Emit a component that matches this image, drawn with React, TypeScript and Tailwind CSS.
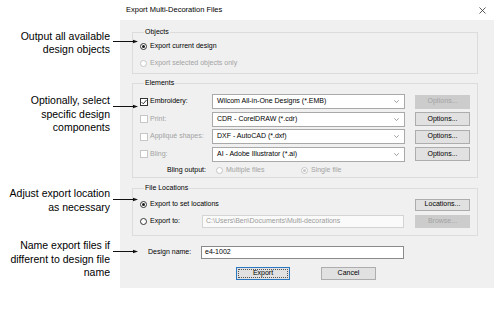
import clsx from "clsx";

const sans = "font-['Liberation_Sans',Arial,sans-serif]";

function Radio({ checked, disabled }: { checked?: boolean; disabled?: boolean }) {
  return (
    <span
      className={clsx(
        "flex h-[7px] w-[7px] shrink-0 items-center justify-center rounded-full border bg-white",
        disabled ? "border-[#c6c6c6]" : "border-[#333333]"
      )}
    >
      {checked && (
        <span className={clsx("h-[3px] w-[3px] rounded-full", disabled ? "bg-[#c6c6c6]" : "bg-[#1a1a1a]")} />
      )}
    </span>
  );
}

function Check({ checked, disabled }: { checked?: boolean; disabled?: boolean }) {
  return (
    <span
      className={clsx(
        "flex h-[8px] w-[8px] shrink-0 items-center justify-center border bg-white",
        disabled ? "border-[#c6c6c6]" : "border-[#333333]"
      )}
    >
      {checked && (
        <svg width="6" height="6" viewBox="0 0 6 6">
          <path d="M0.6 3.1 L2.3 4.8 L5.5 1" fill="none" stroke="#222" strokeWidth="0.9" />
        </svg>
      )}
    </span>
  );
}

function Btn({ label, disabled, className }: { label: string; disabled?: boolean; className?: string }) {
  return (
    <div
      className={clsx(
        "flex w-[55px] shrink-0 items-center justify-center border text-[7px]",
        disabled ? "border-[#cccccc] bg-[#cccccc] text-[#a3a3a3]" : "border-[#adadad] bg-[#e1e1e1] text-black",
        className ?? "h-[14px]"
      )}
    >
      {label}
    </div>
  );
}

function Group({ title, children, className }: { title: string; children: React.ReactNode; className?: string }) {
  return (
    <fieldset className={clsx("border border-[#dcdcdc] px-[7px]", className)}>
      <legend className="ml-[4px] px-[1px] text-[7px] leading-[8px] text-black">{title}</legend>
      {children}
    </fieldset>
  );
}

function Arrow() {
  return (
    <svg className="absolute left-[113px] top-[9.5px] z-10" width="25" height="5" viewBox="0 0 25 5">
      <line x1="0" y1="2.5" x2="21" y2="2.5" stroke="#111" strokeWidth="1" />
      <polygon points="20,0.8 25,2.5 20,4.2" fill="#111" />
    </svg>
  );
}

function Note({ lines, className }: { lines: string[]; className: string }) {
  return (
    <div className={clsx("relative", className)}>
      {lines.map((l, i) => (
        <div key={i}>{l}</div>
      ))}
      <Arrow />
    </div>
  );
}

const elements = [
  { label: "Embroidery:", on: true, combo: "Wilcom All-in-One Designs (*.EMB)", optOff: true },
  { label: "Print:", on: false, combo: "CDR - CorelDRAW (*.cdr)", optOff: false },
  { label: "Appliqué shapes:", on: false, combo: "DXF - AutoCAD (*.dxf)", optOff: false },
  { label: "Bling:", on: false, combo: "AI - Adobe Illustrator (*.ai)", optOff: false },
];

export default function App() {
  return (
    <div className={clsx("flex h-[309px] w-[494px] overflow-hidden bg-white", sans)}>
      {/* callouts */}
      <div className="flex w-[120px] shrink-0 flex-col pr-[10px] text-right text-[10.5px] leading-[13.5px] text-black">
        <Note className="mt-[29.5px]" lines={["Output all available", "design objects"]} />
        <Note className="mt-[37.5px]" lines={["Optionally, select", "specific design", "components"]} />
        <Note className="mt-[52.5px]" lines={["Adjust export location", "as necessary"]} />
        <Note className="mt-[25px]" lines={["Name export files if", "different to design file", "name"]} />
      </div>

      {/* dialog */}
      <div className="flex h-[288px] w-[374px] shrink-0 flex-col bg-[#f0f0f0] text-[7px] text-black">
        <div className="flex h-[20px] items-center justify-between bg-white pl-[6px] pr-[8px]">
          <span className="text-[7.5px]">Export Multi-Decoration Files</span>
          <svg width="7" height="7" viewBox="0 0 7 7">
            <path d="M0.5 0.5 L6.5 6.5 M6.5 0.5 L0.5 6.5" stroke="#333" strokeWidth="0.8" />
          </svg>
        </div>

        <div className="flex flex-col pl-[12px] pr-[16px] pt-[8px]">
          <Group title="Objects">
            <div className="flex flex-col gap-[3px] pb-[3px] pt-[3px]">
              <div className="flex h-[14px] items-center gap-[3px]">
                <Radio checked />
                <span>Export current design</span>
              </div>
              <div className="flex h-[14px] items-center gap-[3px] text-[#a3a3a3]">
                <Radio disabled />
                <span>Export selected objects only</span>
              </div>
            </div>
          </Group>

          <Group title="Elements" className="mt-[5px]">
            <div className="flex flex-col gap-[2.5px] pt-[7px]">
              {elements.map((e) => (
                <div key={e.label} className="flex h-[15px] items-center">
                  <div className={clsx("flex w-[72px] items-center gap-[2px]", !e.on && "text-[#a3a3a3]")}>
                    <Check checked={e.on} disabled={!e.on} />
                    <span>{e.label}</span>
                  </div>
                  <div className="flex h-[15px] w-[193px] items-center justify-between border border-[#a9a9a9] bg-white pl-[4px] pr-[5px]">
                    <span>{e.combo}</span>
                    <svg width="5" height="3" viewBox="0 0 5 3">
                      <path d="M0.3 0.3 L2.5 2.6 L4.7 0.3" fill="none" stroke="#777" strokeWidth="0.7" />
                    </svg>
                  </div>
                  <Btn label="Options..." disabled={e.optOff} className="ml-[10px] h-[14px]" />
                </div>
              ))}
            </div>
            <div className="mt-[3.5px] flex h-[12px] items-center pb-[1px]">
              <span className="w-[66px] text-right">Bling output:</span>
              <div className="ml-[10px] flex w-[85px] items-center gap-[3px] text-[#a3a3a3]">
                <Radio disabled />
                <span>Multiple files</span>
              </div>
              <div className="flex items-center gap-[3px] text-[#a3a3a3]">
                <Radio checked disabled />
                <span>Single file</span>
              </div>
            </div>
          </Group>

          <Group title="File Locations" className="mt-[6px]">
            <div className="flex flex-col gap-[4px] pb-[7px] pt-[6px]">
              <div className="flex h-[13px] items-center">
                <div className="flex flex-1 items-center gap-[3px]">
                  <Radio checked />
                  <span>Export to set locations</span>
                </div>
                <Btn label="Locations..." className="h-[12px]" />
              </div>
              <div className="flex h-[13px] items-center">
                <div className="flex w-[62px] items-center gap-[3px]">
                  <Radio />
                  <span>Export to:</span>
                </div>
                <div className="flex h-[13px] w-[202px] items-center border border-[#d4d4d4] bg-[#fafafa] pl-[3px] text-[#9a9a9a]">
                  C:\Users\Ben\Documents\Multi-decorations
                </div>
                <Btn label="Browse..." disabled className="ml-[11px] h-[13px]" />
              </div>
            </div>
          </Group>

          <div className="mt-[10px] flex h-[13px] items-center pl-[16px]">
            <span className="w-[53px]">Design name:</span>
            <div className="flex h-[13px] w-[203px] items-center border border-[#8a8a8a] bg-white pl-[3px]">e4-1002</div>
          </div>

          <div className="mt-[8px] flex h-[13px] items-center pl-[104px]">
            <div className="flex h-[13px] w-[54px] items-center justify-center border border-[#2a78c2] bg-[#e1e1e1] p-[1px]">
              <span className="flex h-full w-full items-center justify-center border border-dotted border-[#555]">
                Export
              </span>
            </div>
            <Btn label="Cancel" className="ml-[31px] h-[13px]" />
          </div>
        </div>
      </div>
    </div>
  );
}
